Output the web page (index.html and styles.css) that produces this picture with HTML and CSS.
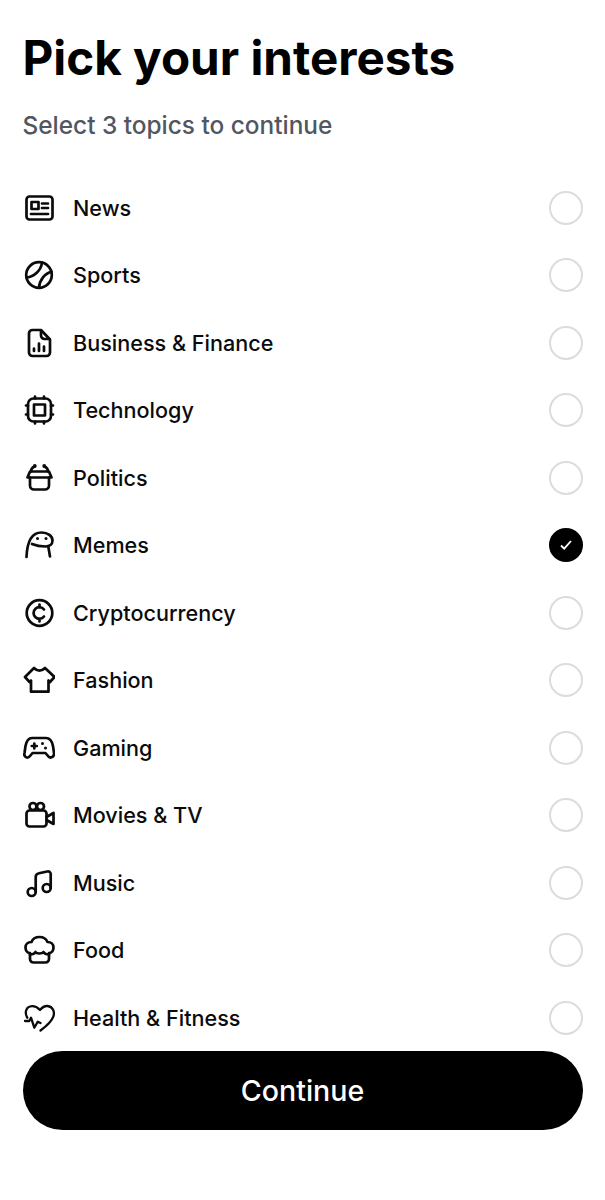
FILE: index.html
```html
<!DOCTYPE html>
<html lang="en">
<head>
<meta charset="utf-8">
<title>Pick your interests</title>
<link rel="stylesheet" href="styles.css">
</head>
<body>
<main class="page">
  <h1 class="title">Pick your interests</h1>
  <p class="subtitle">Select 3 topics to continue</p>
  <ul class="topics">
    <li class="topic">
      <svg class="icon" viewBox="0 0 32 32"><rect x="3.500" y="4.500" width="26" height="23" rx="3"/><rect x="8.500" y="10" width="7" height="7"/><path d="M19 11.500h6M19 16h6M8 22h17"/></svg>
      <span class="label">News</span><span class="radio"></span>
    </li>
    <li class="topic">
      <svg class="icon" viewBox="0 0 32 32"><circle cx="16" cy="16" r="12.800"/><path d="M3.800 18.500C11 18 18 11.500 19 3.600M16 28.600C16.500 21 22 14 28.600 12.800"/></svg>
      <span class="label">Sports</span><span class="radio"></span>
    </li>
    <li class="topic">
      <svg class="icon" viewBox="0 0 32 32"><path d="M9.500 3H18l9 9.500V25.500a3.500 3.500 0 0 1-3.500 3.500h-14A3.500 3.500 0 0 1 6 25.500V6.500A3.500 3.500 0 0 1 9.500 3z"/><path d="M18 3.500V8.500a3.500 3.500 0 0 0 3.500 3.500h5"/><path d="M11 21.500v2.500M16 16.500v7.500M21 19.500v4.500"/></svg>
      <span class="label">Business &amp; Finance</span><span class="radio"></span>
    </li>
    <li class="topic">
      <svg class="icon" viewBox="0 0 32 32"><rect x="5" y="4.500" width="23" height="23" rx="5.500"/><rect x="11" y="10.500" width="11" height="11"/><path d="M12 2.500v2M21 2.500v2M12 27.500v2M21 27.500v2M3 11.500h2M3 20.500h2M28 11.500h2M28 20.500h2"/></svg>
      <span class="label">Technology</span><span class="radio"></span>
    </li>
    <li class="topic">
      <svg class="icon" viewBox="0 0 32 32"><path d="M7 9.500H26l2.500 6H4.500z"/><path d="M7 15.500v8a4 4 0 0 0 4 4h11a4 4 0 0 0 4-4v-8"/><path d="M8 9.500C8 7 9 5.500 11.500 4.500M25 9.500C25 7 24 5.500 21.500 4.500"/><circle class="dot" cx="11.800" cy="4" r="1.900"/><circle class="dot" cx="21.200" cy="4" r="1.900"/></svg>
      <span class="label">Politics</span><span class="radio"></span>
    </li>
    <li class="topic">
      <svg class="icon" viewBox="0 0 32 32"><path d="M3.500 28C4 16 7 3.500 18.500 3.500c6.500 0 11 3.500 11 8 0 4-3 6-7 6-5 0-10-1-13.500-2.500"/><path d="M25.300 17.500l1.700 10"/><circle class="dot" cx="14.500" cy="9.500" r="1.500"/><circle class="dot" cx="23" cy="9.500" r="1.500"/></svg>
      <span class="label">Memes</span><span class="radio radio-on"><svg class="check" viewBox="0 0 14 14"><path d="M2 7.500l3.200 3.200L12 3"/></svg></span>
    </li>
    <li class="topic">
      <svg class="icon" viewBox="0 0 32 32"><circle cx="16.500" cy="16" r="12.800"/><path d="M21 12.500a5.800 5.800 0 1 0 0 7M16.500 7.500v3M16.500 21.500v3"/></svg>
      <span class="label">Cryptocurrency</span><span class="radio"></span>
    </li>
    <li class="topic">
      <svg class="icon" viewBox="0 0 32 32"><path d="M11 4Q16.500 9.500 22 4L31.500 13 27 18 25.500 16.500V27.700H8V16.500L6.500 18 2 13Z"/></svg>
      <span class="label">Fashion</span><span class="radio"></span>
    </li>
    <li class="topic">
      <svg class="icon" viewBox="0 0 32 32"><path d="M9 6H23C27 6 29 9 30 14L31 21C31.500 25 27 27 25 24L22.500 21H9.500L7 24C4.500 27 .5 25 1.500 21L2.500 14C3.500 9 5 6 9 6Z"/><path d="M11.300 11.500v5M8.800 14h5"/><circle class="dot" cx="19.500" cy="11.500" r="1.500"/><circle class="dot" cx="22.500" cy="16" r="1.500"/></svg>
      <span class="label">Gaming</span><span class="radio"></span>
    </li>
    <li class="topic">
      <svg class="icon" viewBox="0 0 32 32"><rect x="3.500" y="11.500" width="20" height="16" rx="3"/><circle cx="10" cy="7.500" r="3.500"/><circle cx="17.500" cy="7.500" r="3.500"/><path d="M23.500 18l7-4v11l-7-4"/></svg>
      <span class="label">Movies &amp; TV</span><span class="radio"></span>
    </li>
    <li class="topic">
      <svg class="icon" viewBox="0 0 32 32"><circle cx="8.700" cy="25" r="4"/><circle cx="23.700" cy="21" r="4"/><path d="M12.700 25V10C12.700 7.500 14 6.700 16 6.300L24 4.500C26 4 27.700 5 27.700 7V21"/></svg>
      <span class="label">Music</span><span class="radio"></span>
    </li>
    <li class="topic">
      <svg class="icon" viewBox="0 0 32 32"><path d="M7 19C4 19 2.500 16 2.500 13.500 2.500 10 5 8 8.500 8 10 4 13 3 16.500 3 20 3 23 4.500 24.500 8 28 8 30.500 10 30.500 13.500 30.500 16 29 19 26 19V25A3.500 3.500 0 0 1 22.500 28.500H10.500A3.500 3.500 0 0 1 7 25Z"/><path d="M7 20.500c3 0 4.500-.5 5.500-2.500 1 2 6.500 2 8 0 1 2 2.500 2.500 5.500 2.500"/></svg>
      <span class="label">Food</span><span class="radio"></span>
    </li>
    <li class="topic">
      <svg class="icon icon-fine" viewBox="0 0 32 32"><path d="M4.300 15.700C1 10 3.500 4.500 9 4.200 12.500 4 15 6 17 8 19 5.500 21.500 3.800 24.500 4 30 4.500 32 10 30.300 14.700 28.500 20 23 24.500 17.500 28.500"/><path d="M2 19H6.300L8 15.700 11.300 25.700 14.700 19.700 17.500 21"/></svg>
      <span class="label">Health &amp; Fitness</span><span class="radio"></span>
    </li>
  </ul>
  <button class="continue" type="button">Continue</button>
</main>
</body>
</html>
```

FILE: styles.css
```css
* { box-sizing: border-box; }
html, body { margin: 0; background: #fff; }
body { font-family: Inter, "Liberation Sans", sans-serif; color: #0b0b0c; }
.page { width: 605px; height: 1200px; padding: 30px 22.500px 0; display: flex; flex-direction: column; }
.title { margin: 0; font-size: 47.600px; line-height: 56px; font-weight: 700; color: #000; }
.subtitle { margin: 23px 0 0; font-size: 24.400px; line-height: 32px; font-weight: 500; color: #51565f; }
.topics { list-style: none; margin: 33px 0 0; padding: 0; }
.topic { display: flex; align-items: center; height: 67.500px; }
.icon { flex: none; width: 32px; height: 32px; margin-right: 18.500px; fill: none; stroke: #0b0b0c; stroke-width: 2.700; stroke-linecap: round; stroke-linejoin: round; }
.icon-fine { stroke-width: 2.300; }
.icon .dot { fill: #0b0b0c; stroke: none; }
.label { flex: 1; font-size: 21.600px; font-weight: 500; line-height: 28px; }
.radio { flex: none; width: 34px; height: 34px; border: 2px solid #dadce0; border-radius: 50%; display: flex; align-items: center; justify-content: center; }
.radio-on { background: #000; border-color: #000; }
.check { width: 14px; height: 14px; fill: none; stroke: #fff; stroke-width: 1.800; }
.continue { margin-top: -1px; height: 79px; width: 560px; border: 0; border-radius: 40px; background: #000; color: #fff; font-family: inherit; font-size: 28.600px; font-weight: 500; }
```
